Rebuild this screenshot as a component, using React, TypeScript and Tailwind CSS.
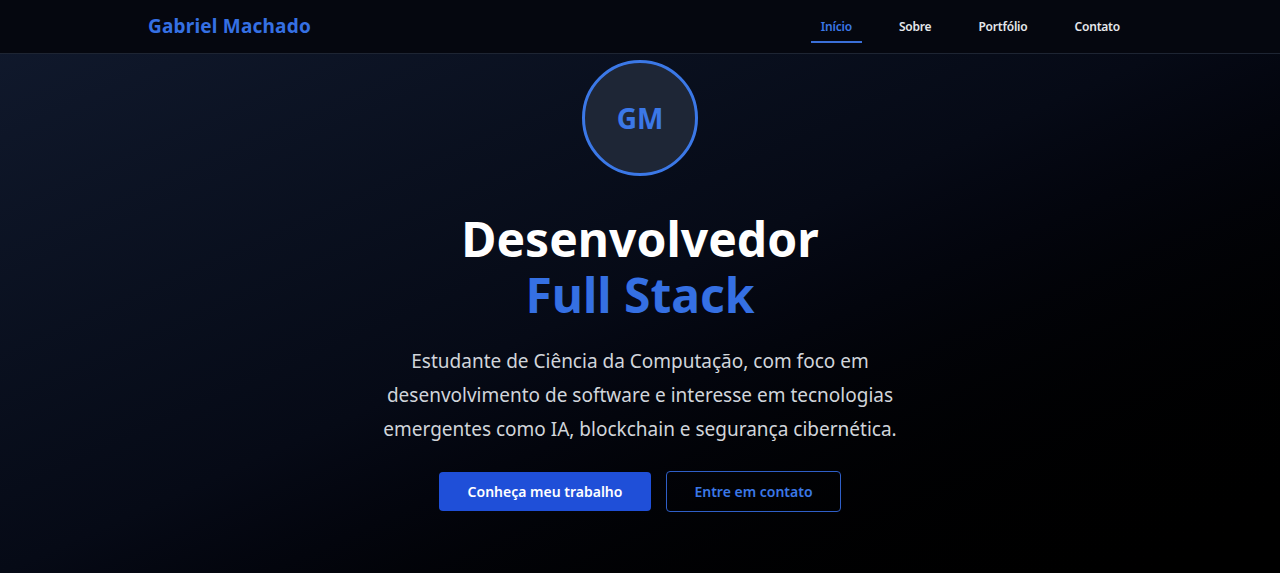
import React from 'react';

const NAV = ['Início', 'Sobre', 'Portfólio', 'Contato'];

const Header = () => (
  <header className="h-[54px] bg-[#05070f] border-b border-[#1e2533]">
    <div className="max-w-5xl mx-auto px-5 h-full flex items-center justify-between">
      <span className="text-[19px] font-bold text-[#3570e3] tracking-[0.2px]">Gabriel Machado</span>
      <nav className="flex items-center gap-[27px] pr-[2px]">
        {NAV.map((item, idx) => (
          <a
            key={item}
            className={`relative px-[10px] py-[6px] text-[12px] tracking-[-0.2px] font-semibold ${idx === 0 ? 'text-[#3b78e7]' : 'text-[#e5e7eb]'}`}
          >
            {item}
            {idx === 0 && <span className="absolute left-0 right-0 bottom-[-1px] h-[2px] bg-[#3b6fd8]" />}
          </a>
        ))}
      </nav>
    </div>
  </header>
);

export default function App() {
  return (
    <div
      className="min-h-[573px] bg-gradient-to-br from-[#111a2e] via-[#060a16] to-[#000000] text-white"
      style={{ fontFamily: '"Noto Sans", "Open Sans", sans-serif' }}
    >
      <Header />
      <section className="flex flex-col items-center text-center pt-[6px]">
        {/* Avatar */}
        <div className="w-[116px] h-[116px] rounded-full border-[3px] border-[#3b78e7] bg-[#1e2636] flex items-center justify-center">
          <span className="text-[28px] font-bold text-[#3b78e7]">GM</span>
        </div>

        <h1 className="mt-[35px] text-[48px] font-bold leading-[56px]">
          <span className="block text-white">Desenvolvedor</span>
          <span className="block text-[#3570e3]">Full Stack</span>
        </h1>

        <p className="mt-[21px] max-w-[540px] text-[19px] leading-[34px] text-[#d1d5db]">
          Estudante de Ciência da Computação, com foco em desenvolvimento de software e interesse em tecnologias
          emergentes como IA, blockchain e segurança cibernética.
        </p>

        <div className="mt-[25px] flex items-center gap-[15px]">
          <button className="w-[212px] h-[39px] rounded-[4px] bg-[#1f4fd8] text-[14px] font-semibold text-white">
            Conheça meu trabalho
          </button>
          <button className="w-[175px] h-[41px] rounded-[4px] border border-[#2f5fc8] text-[14px] font-semibold text-[#3b78e7]">
            Entre em contato
          </button>
        </div>
      </section>
    </div>
  );
}
